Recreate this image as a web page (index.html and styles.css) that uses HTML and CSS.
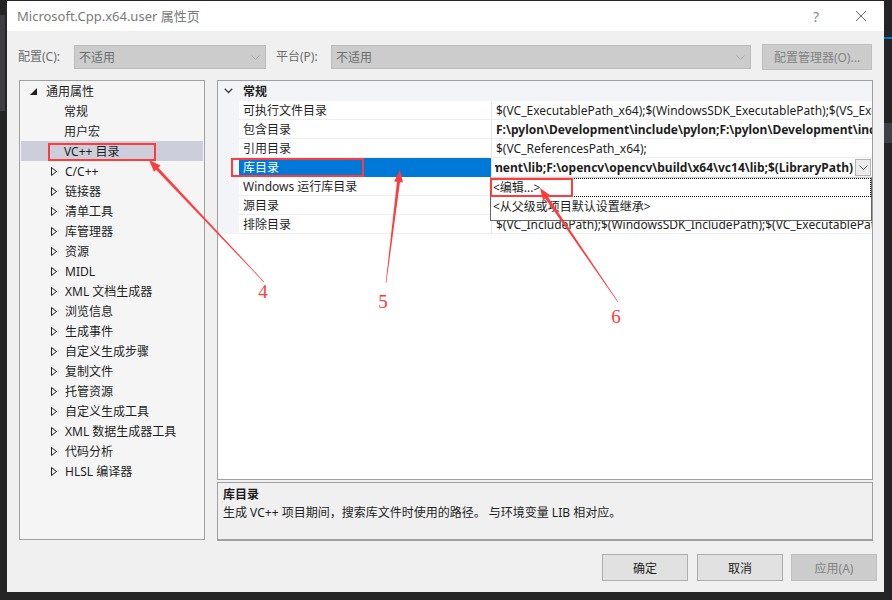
FILE: index.html
```html
<!DOCTYPE html>
<html lang="zh-CN">
<head>
<meta charset="utf-8">
<title>属性页</title>
<link rel="stylesheet" href="styles.css">
</head>
<body>
<div class="dialog">
  <div class="titlebar">
    <span class="title">Microsoft.Cpp.x64.user 属性页</span>
    <span class="help">?</span>
    <span class="close"><svg width="12" height="12" viewBox="0 0 12 12"><path d="M1 1L11 11M11 1L1 11" stroke="#666" stroke-width="1" fill="none"/></svg></span>
  </div>

  <div class="config-row">
    <span class="lbl lbl-config">配置(C):</span>
    <div class="combo combo-config"><span class="combo-text">不适用</span><svg class="chev" width="9" height="5" viewBox="0 0 9 5"><path d="M0.5 0.5L4.5 4.5L8.5 0.5" stroke="#a8a8a8" fill="none"/></svg></div>
    <span class="lbl lbl-platform">平台(P):</span>
    <div class="combo combo-platform"><span class="combo-text">不适用</span><svg class="chev" width="9" height="5" viewBox="0 0 9 5"><path d="M0.5 0.5L4.5 4.5L8.5 0.5" stroke="#a8a8a8" fill="none"/></svg></div>
    <button class="btn btn-disabled btn-mgr">配置管理器(O)...</button>
  </div>

  <div class="main">
    <div class="tree">
      <div class="node node-root"><svg class="tri" width="7" height="7" viewBox="0 0 7 7"><path d="M7 0L7 7L0 7Z" fill="#1e1e1e"/></svg><span>通用属性</span></div>
      <div class="node node-leaf">常规</div>
      <div class="node node-leaf">用户宏</div>
      <div class="node node-leaf node-sel">VC++ 目录</div>
      <div class="node node-sub"><svg class="tri" width="6" height="9" viewBox="0 0 6 9"><path d="M0.5 0.5L5.5 4.5L0.5 8.5Z" fill="none" stroke="#1e1e1e"/></svg><span>C/C++</span></div>
      <div class="node node-sub"><svg class="tri" width="6" height="9" viewBox="0 0 6 9"><path d="M0.5 0.5L5.5 4.5L0.5 8.5Z" fill="none" stroke="#1e1e1e"/></svg><span>链接器</span></div>
      <div class="node node-sub"><svg class="tri" width="6" height="9" viewBox="0 0 6 9"><path d="M0.5 0.5L5.5 4.5L0.5 8.5Z" fill="none" stroke="#1e1e1e"/></svg><span>清单工具</span></div>
      <div class="node node-sub"><svg class="tri" width="6" height="9" viewBox="0 0 6 9"><path d="M0.5 0.5L5.5 4.5L0.5 8.5Z" fill="none" stroke="#1e1e1e"/></svg><span>库管理器</span></div>
      <div class="node node-sub"><svg class="tri" width="6" height="9" viewBox="0 0 6 9"><path d="M0.5 0.5L5.5 4.5L0.5 8.5Z" fill="none" stroke="#1e1e1e"/></svg><span>资源</span></div>
      <div class="node node-sub"><svg class="tri" width="6" height="9" viewBox="0 0 6 9"><path d="M0.5 0.5L5.5 4.5L0.5 8.5Z" fill="none" stroke="#1e1e1e"/></svg><span>MIDL</span></div>
      <div class="node node-sub"><svg class="tri" width="6" height="9" viewBox="0 0 6 9"><path d="M0.5 0.5L5.5 4.5L0.5 8.5Z" fill="none" stroke="#1e1e1e"/></svg><span>XML 文档生成器</span></div>
      <div class="node node-sub"><svg class="tri" width="6" height="9" viewBox="0 0 6 9"><path d="M0.5 0.5L5.5 4.5L0.5 8.5Z" fill="none" stroke="#1e1e1e"/></svg><span>浏览信息</span></div>
      <div class="node node-sub"><svg class="tri" width="6" height="9" viewBox="0 0 6 9"><path d="M0.5 0.5L5.5 4.5L0.5 8.5Z" fill="none" stroke="#1e1e1e"/></svg><span>生成事件</span></div>
      <div class="node node-sub"><svg class="tri" width="6" height="9" viewBox="0 0 6 9"><path d="M0.5 0.5L5.5 4.5L0.5 8.5Z" fill="none" stroke="#1e1e1e"/></svg><span>自定义生成步骤</span></div>
      <div class="node node-sub"><svg class="tri" width="6" height="9" viewBox="0 0 6 9"><path d="M0.5 0.5L5.5 4.5L0.5 8.5Z" fill="none" stroke="#1e1e1e"/></svg><span>复制文件</span></div>
      <div class="node node-sub"><svg class="tri" width="6" height="9" viewBox="0 0 6 9"><path d="M0.5 0.5L5.5 4.5L0.5 8.5Z" fill="none" stroke="#1e1e1e"/></svg><span>托管资源</span></div>
      <div class="node node-sub"><svg class="tri" width="6" height="9" viewBox="0 0 6 9"><path d="M0.5 0.5L5.5 4.5L0.5 8.5Z" fill="none" stroke="#1e1e1e"/></svg><span>自定义生成工具</span></div>
      <div class="node node-sub"><svg class="tri" width="6" height="9" viewBox="0 0 6 9"><path d="M0.5 0.5L5.5 4.5L0.5 8.5Z" fill="none" stroke="#1e1e1e"/></svg><span>XML 数据生成器工具</span></div>
      <div class="node node-sub"><svg class="tri" width="6" height="9" viewBox="0 0 6 9"><path d="M0.5 0.5L5.5 4.5L0.5 8.5Z" fill="none" stroke="#1e1e1e"/></svg><span>代码分析</span></div>
      <div class="node node-sub"><svg class="tri" width="6" height="9" viewBox="0 0 6 9"><path d="M0.5 0.5L5.5 4.5L0.5 8.5Z" fill="none" stroke="#1e1e1e"/></svg><span>HLSL 编译器</span></div>
    </div>

    <div class="right">
      <div class="grid">
        <div class="grow ghead">
          <div class="gutter"><svg width="9" height="6" viewBox="0 0 9 6"><path d="M0.8 0.8L4.5 4.5L8.2 0.8" stroke="#3c3c3c" stroke-width="1.3" fill="none"/></svg></div>
          <div class="gtitle">常规</div>
        </div>
        <div class="grow">
          <div class="gutter"></div>
          <div class="gname">可执行文件目录</div>
          <div class="gval">$(VC_ExecutablePath_x64);$(WindowsSDK_ExecutablePath);$(VS_ExecutablePath);$(MSBuild_ExecutablePath);$(FxCopDir);$(PATH);</div>
        </div>
        <div class="grow">
          <div class="gutter"></div>
          <div class="gname">包含目录</div>
          <div class="gval bold">F:\pylon\Development\include\pylon;F:\pylon\Development\include;F:\opencv\opencv\build\include</div>
        </div>
        <div class="grow">
          <div class="gutter"></div>
          <div class="gname">引用目录</div>
          <div class="gval">$(VC_ReferencesPath_x64);</div>
        </div>
        <div class="grow grow-sel">
          <div class="gutter"></div>
          <div class="gname">库目录</div>
          <div class="gval gedit">
            <div class="edit-text bold"><span>F:\pylon\Development\lib;F:\opencv\opencv\build\x64\vc14\lib;$(LibraryPath)</span></div>
            <div class="ddbtn"><svg width="9" height="5" viewBox="0 0 9 5"><path d="M0.5 0.5L4.5 4.5L8.5 0.5" stroke="#606060" fill="none"/></svg></div>
          </div>
        </div>
        <div class="grow">
          <div class="gutter"></div>
          <div class="gname">Windows 运行库目录</div>
          <div class="gval"></div>
        </div>
        <div class="grow">
          <div class="gutter"></div>
          <div class="gname">源目录</div>
          <div class="gval"></div>
        </div>
        <div class="grow">
          <div class="gutter"></div>
          <div class="gname">排除目录</div>
          <div class="gval">$(VC_IncludePath);$(WindowsSDK_IncludePath);$(VC_ExecutablePath_x64);$(VC_LibraryPath_x64)</div>
        </div>
        <div class="popup">
          <div class="pitem pfocus">&lt;编辑...&gt;</div>
          <div class="pitem">&lt;从父级或项目默认设置继承&gt;</div>
        </div>
      </div>
      <div class="desc">
        <div class="desc-title">库目录</div>
        <div class="desc-text">生成 VC++ 项目期间，搜索库文件时使用的路径。 与环境变量 LIB 相对应。</div>
      </div>
    </div>
  </div>

  <div class="buttons">
    <button class="btn">确定</button>
    <button class="btn">取消</button>
    <button class="btn btn-disabled">应用(A)</button>
  </div>
</div>

<svg class="annot" width="892" height="600" viewBox="0 0 892 600">
  <rect x="49" y="144" width="106" height="16" fill="none" stroke="#ff3b3b" stroke-width="2"/>
  <rect x="232" y="159" width="131" height="17" fill="none" stroke="#ff3b3b" stroke-width="2"/>
  <rect x="491" y="179" width="81" height="17" fill="none" stroke="#ff3b3b" stroke-width="2"/>
  <polygon points="264.2,281.8 158.3,167.7 160.5,165.6 149,160 154.0,171.8 156.1,169.8 263.8,282.2" fill="#ff3b3b"/>
  <polygon points="386.3,283.0 400.0,182.1 403.0,182.5 400,170 394.1,181.4 397.0,181.7 385.7,283.0" fill="#ff3b3b"/>
  <polygon points="618.2,301.8 548.0,197.1 550.5,195.4 540,188 543.1,200.5 545.5,198.8 617.8,302.2" fill="#ff3b3b"/>
  <text x="263" y="298" class="num">4</text>
  <text x="383" y="308" class="num">5</text>
  <text x="616" y="323" class="num">6</text>
</svg>
</body>
</html>
```

FILE: styles.css
```css
* { box-sizing: border-box; }
html, body { margin: 0; padding: 0; }
body {
  width: 892px;
  height: 600px;
  overflow: hidden;
  position: relative;
  background:
    linear-gradient(#007acc, #007acc) 884px 37px / 8px 2px no-repeat,
    linear-gradient(#3f3f46, #3f3f46) 884px 123px / 8px 20px no-repeat,
    linear-gradient(#3e3e42, #3e3e42) 0 15px / 5px 96px no-repeat,
    #252526;
  font-family: "Noto Sans", "Noto Sans CJK SC", sans-serif;
  font-size: 12px;
  color: #1e1e1e;
}

.dialog {
  margin: 1px 0 0 7px;
  width: 877px;
  height: 591px;
  background: #f0f0f0;
  display: flex;
  flex-direction: column;
}

.titlebar {
  flex: none;
  height: 30px;
  background: #fff;
  display: flex;
  align-items: center;
  padding-left: 10px;
}
.title { flex: 1; font-size: 13px; color: #7a7a7a; margin-top: -1px; }
.help { width: 20px; text-align: center; color: #8a8a8a; font-size: 14px; margin-right: 12px; }
.close { width: 46px; height: 30px; display: flex; align-items: center; justify-content: center; }

.config-row {
  flex: none;
  margin: 13px 0 0 11px;
  height: 26px;
  display: flex;
  align-items: center;
}
.lbl { color: #6d6d6d; line-height: 16px; }
.lbl-config { width: 56px; }
.lbl-platform { width: 55px; margin-left: 10px; }
.combo {
  height: 24px;
  background: #cccccc;
  border: 1px solid #bcbcbc;
  display: flex;
  align-items: center;
  padding: 0 5px 0 4px;
  color: #6d6d6d;
}
.combo-text { flex: 1; }
.combo-config { width: 192px; }
.combo-platform { width: 420px; }

.btn {
  font: inherit;
  height: 27px;
  width: 86px;
  background: #e1e1e1;
  border: 1px solid #adadad;
  color: #1e1e1e;
  padding: 0;
  text-align: center;
}
.btn-disabled { background: #cccccc; border-color: #bfbfbf; color: #838383; }
.btn-mgr { width: 110px; height: 26px; margin-left: 11px; }

.main {
  flex: none;
  margin: 10px 0 0 12px;
  height: 461px;
  display: flex;
  gap: 12px;
}

.tree {
  width: 186px;
  height: 460px;
  background: #f5f5f5;
  border: 1px solid #a0a0a0;
  padding: 0 1px;
}
.node {
  height: 20px;
  padding-top: 2px;
  display: flex;
  align-items: center;
  line-height: 16px;
  white-space: nowrap;
}
.node-root { padding-left: 9px; }
.node-root .tri { margin-right: 9px; margin-top: -2px; }
.node-leaf { padding-left: 43px; }
.node-sub { padding-left: 30px; }
.node-sub .tri { margin-right: 8px; margin-top: -1px; }
.node-sel { background: #cccedb; }

.right {
  width: 656px;
  display: flex;
  flex-direction: column;
  gap: 2px;
}

.grid {
  position: relative;
  height: 400px;
  background: #fff;
  border: 1px solid #a0a0a0;
  overflow: hidden;
}
.grow {
  display: grid;
  grid-template-columns: 21px 252px 1fr;
  height: 19px;
  line-height: 16px;
}
.grow > div { border-bottom: 1px solid #eceef2; white-space: nowrap; overflow: hidden; display: flex; align-items: center; padding-top: 1px; }
.grow > .gutter { background: #f3f4f8; border-bottom-color: #f3f4f8; justify-content: center; padding-top: 0; }
.ghead { height: 20px; background: #f3f4f8; }
.ghead > div { border-bottom: none; }
.gtitle { grid-column: 2 / 4; font-weight: bold; padding-left: 4px; }
.gname { padding-left: 4px; }
.gval { padding-left: 4px; border-left: 1px solid #e6e6e6; }
.bold { font-weight: bold; }
.grow-sel .gname { background: #0078d7; color: #fff; border-bottom-color: #0078d7; }
.grow > .gedit { padding-left: 3px; padding-right: 1px; padding-top: 0; }
.edit-text {
  flex: 1;
  min-width: 0;
  overflow: hidden;
  display: flex;
  justify-content: flex-end;
  white-space: nowrap;
  padding-top: 1px;
}
.edit-text span { flex: none; }
.ddbtn {
  flex: none;
  width: 16px;
  height: 17px;
  margin-left: 2px;
  background: #ececec;
  border: 1px solid #b4b4b4;
  display: flex;
  align-items: center;
  justify-content: center;
}

.popup {
  position: absolute;
  left: 272px;
  top: 96px;
  width: 382px;
  height: 44px;
  background: #fff;
  border: 1px solid #646464;
  border-top-color: #cfcfcf;
}
.pitem {
  height: 19px;
  line-height: 17px;
  padding-left: 2px;
  padding-top: 1px;
  white-space: nowrap;
}
.pfocus { outline: 1px dotted #000; outline-offset: -1px; }

.desc {
  height: 59px;
  background: #f0f0f0;
  border: 1px solid #a0a0a0;
  border-bottom: 2px solid #a0a0a0;
  padding: 3px 5px 0 5px;
  line-height: 18px;
}
.desc-title { font-weight: bold; }

.buttons {
  flex: none;
  margin-top: 13px;
  padding-right: 7px;
  display: flex;
  justify-content: flex-end;
  gap: 9px;
}
.buttons .btn:last-child { margin-left: -1px; }

.annot {
  position: absolute;
  left: 0;
  top: 0;
  pointer-events: none;
}
.num {
  font-family: "Liberation Serif", serif;
  font-size: 19px;
  fill: #ff3b3b;
  text-anchor: middle;
}
```
